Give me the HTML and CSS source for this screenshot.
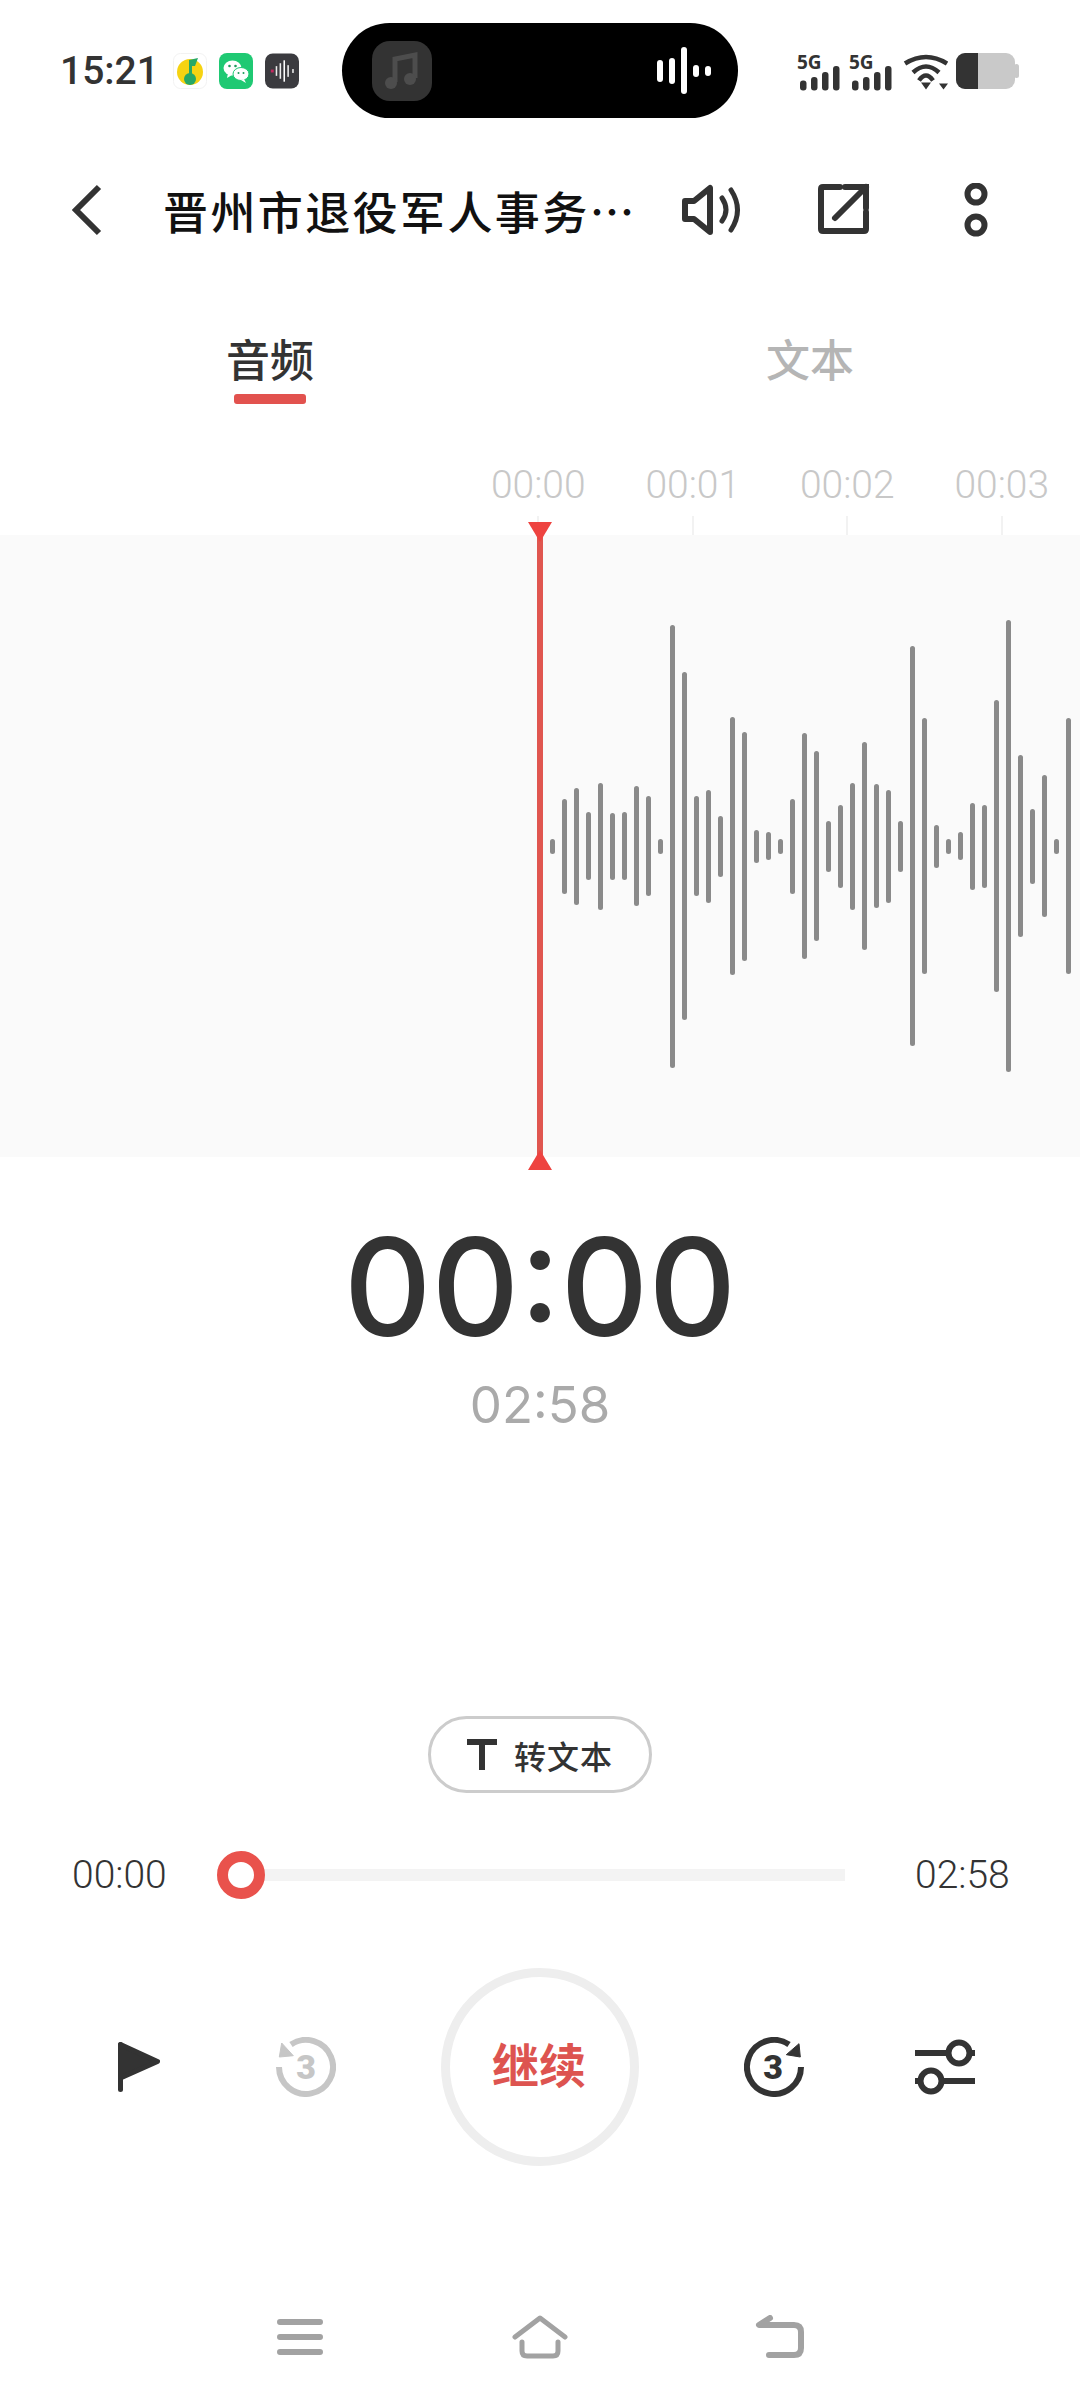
FILE: index.html
```html
<!DOCTYPE html>
<html lang="zh-CN">
  <head>
    <meta charset="UTF-8" />
    <meta name="viewport" content="width=device-width, initial-scale=1.0" />
    <title>录音播放</title>
    <link rel="stylesheet" href="styles.css">
  </head>
  <body>
<div class="page">

  <!-- status bar -->
  <div class="statusbar">
    <span class="clock">15:21</span>
    <div class="app-icons">
      <svg class="app-icon" viewBox="0 0 34 36">
        <rect x="0.5" y="0.5" width="33" height="35" rx="7" fill="#fff" stroke="#f2f2f2" />
        <circle cx="17" cy="19" r="13" fill="#f6d312" />
        <path d="M16 7 L25 5 L22 13 L19 13 L19 22 L16 22 Z" fill="#27a866" />
        <circle cx="17" cy="26" r="6" fill="#27a866" />
      </svg>
      <svg class="app-icon" viewBox="0 0 34 36">
        <rect width="34" height="36" rx="8" fill="#1fc973" />
        <ellipse cx="13.5" cy="15" rx="9" ry="7.5" fill="#fff" />
        <path d="M9 20 L8 25 L13 22 Z" fill="#fff" />
        <ellipse cx="22" cy="21" rx="8" ry="6.5" fill="#fff" stroke="#1fc973" />
        <path d="M25 26 L27 30 L22 27 Z" fill="#fff" />
        <circle cx="10.5" cy="13" r="1.3" fill="#1d9c5b" />
        <circle cx="16.5" cy="13" r="1.3" fill="#1d9c5b" />
        <circle cx="19.5" cy="20" r="1" fill="#1d9c5b" />
        <circle cx="24.5" cy="20" r="1" fill="#1d9c5b" />
      </svg>
      <svg class="app-icon" viewBox="0 0 35 36">
        <rect width="35" height="36" rx="8" fill="#3b3b3f" />
        <rect x="6" y="16.5" width="3" height="3" fill="#c2285f" />
        <rect x="11" y="13" width="1.6" height="10" fill="#eee" />
        <rect x="15" y="10" width="1.6" height="16" fill="#eee" />
        <rect x="19" y="7" width="1.6" height="22" fill="#fff" />
        <rect x="23" y="12" width="1.6" height="12" fill="#eee" />
        <rect x="28" y="16" width="1.6" height="4" fill="#eee" />
      </svg>
    </div>

    <div class="island">
      <div class="island-cover">
        <svg width="34" height="40" viewBox="0 0 34 40">
          <path d="M10 31 V8 L30 4 V27" fill="none" stroke="#4d4d4d" stroke-width="5" />
          <circle cx="6" cy="32" r="6" fill="#4d4d4d" />
          <circle cx="25" cy="28" r="6" fill="#4d4d4d" />
        </svg>
      </div>
      <div class="island-wave">
        <i class="w1"></i><i class="w2"></i><i class="w3"></i><i class="w4"></i><i class="w5"></i>
      </div>
    </div>

    <div class="status-right">
      <svg class="signal" viewBox="0 -5 44 50">
        <text x="0" y="17.5" class="signal-label">5G</text>
        <rect x="3" y="29.5" width="6.5" height="10" rx="3" />
        <rect x="14" y="26" width="6.5" height="13.5" rx="3" />
        <rect x="25" y="21" width="6.5" height="18.5" rx="3" />
        <rect x="36" y="15" width="6.5" height="24.5" rx="3" />
      </svg>
      <svg class="signal" viewBox="0 -5 44 50">
        <text x="0" y="17.5" class="signal-label">5G</text>
        <rect x="3" y="29.5" width="6.5" height="10" rx="3" />
        <rect x="14" y="26" width="6.5" height="13.5" rx="3" />
        <rect x="25" y="21" width="6.5" height="18.5" rx="3" />
        <rect x="36" y="15" width="6.5" height="24.5" rx="3" />
      </svg>
      <svg class="wifi" viewBox="0 0 47 38">
        <path d="M4 11.5 Q25 -1.5 46 11.5 M12 20.5 Q25 8.5 38 20.5 M18 28.5 Q25 18.5 32 28.5" fill="none" stroke="#333" stroke-width="4.5" />
        <path d="M20 30.5 H30 L25 37.5 Z M38 31.5 H47 L42.5 37.5 Z" fill="#333" />
      </svg>
      <svg class="battery" viewBox="0 0 63 36">
        <rect width="59" height="36" rx="9" fill="#c9c9c9" />
        <rect x="58" y="11" width="5" height="14" rx="2.5" fill="#c9c9c9" />
        <path d="M9 0 H22 V36 H9 A9 9 0 0 1 0 27 V9 A9 9 0 0 1 9 0 Z" fill="#333" />
      </svg>
    </div>
  </div>

  <!-- toolbar -->
  <div class="toolbar">
    <svg class="tool-back" width="30" height="52" viewBox="0 0 30 52">
      <path d="M27 3 L4 26 L27 49" fill="none" stroke="#333" stroke-width="6" />
    </svg>
    <div class="title">晋州市退役军人事务…</div>
    <svg class="tool-speaker" width="60" height="52" viewBox="0 0 60 52">
      <path d="M3 17 H12 L28 4 V48 L12 35 H3 Z" fill="none" stroke="#333" stroke-width="6" stroke-linejoin="round" />
      <path d="M40 14 Q48 26 40 37 M49 6 Q62 26 49 46" fill="none" stroke="#333" stroke-width="5" stroke-linecap="round" />
    </svg>
    <svg class="tool-share" width="56" height="56" viewBox="0 0 56 56">
      <path d="M24 5 H7 Q5 5 5 7 V47 Q5 49 7 49 H48 Q50 49 50 47 V30" fill="none" stroke="#333" stroke-width="6" stroke-linecap="round" />
      <path d="M29 5 H50 V26 M50 5 L19 36" fill="none" stroke="#333" stroke-width="6" stroke-linecap="round" />
    </svg>
    <svg class="tool-more" width="24" height="54" viewBox="0 0 24 54">
      <circle cx="12" cy="11" r="8.5" fill="none" stroke="#333" stroke-width="6" />
      <circle cx="12" cy="42" r="8.5" fill="none" stroke="#333" stroke-width="6" />
    </svg>
  </div>

  <!-- tabs -->
  <div class="tabs">
    <div class="tab active">音频</div>
    <div class="tab">文本</div>
  </div>

  <!-- time ruler -->
  <div class="ruler">
    <div class="ruler-mark"><span>00:00</span><i></i></div>
    <div class="ruler-mark"><span>00:01</span><i></i></div>
    <div class="ruler-mark"><span>00:02</span><i></i></div>
    <div class="ruler-mark"><span>00:03</span><i></i></div>
  </div>

  <!-- waveform -->
  <div class="wave-panel">
    <div class="bars">
      <div class="bar" style="height:15px"></div>
      <div class="bar" style="height:95px"></div>
      <div class="bar" style="height:117px"></div>
      <div class="bar" style="height:68px"></div>
      <div class="bar" style="height:127px"></div>
      <div class="bar" style="height:67px"></div>
      <div class="bar" style="height:68px"></div>
      <div class="bar" style="height:120px"></div>
      <div class="bar" style="height:100px"></div>
      <div class="bar" style="height:15px"></div>
      <div class="bar" style="height:443px"></div>
      <div class="bar" style="height:348px"></div>
      <div class="bar" style="height:100px"></div>
      <div class="bar" style="height:113px"></div>
      <div class="bar" style="height:61px"></div>
      <div class="bar" style="height:258px"></div>
      <div class="bar" style="height:229px"></div>
      <div class="bar" style="height:33px"></div>
      <div class="bar" style="height:28px"></div>
      <div class="bar" style="height:15px"></div>
      <div class="bar" style="height:95px"></div>
      <div class="bar" style="height:226px"></div>
      <div class="bar" style="height:190px"></div>
      <div class="bar" style="height:51px"></div>
      <div class="bar" style="height:83px"></div>
      <div class="bar" style="height:127px"></div>
      <div class="bar" style="height:208px"></div>
      <div class="bar" style="height:124px"></div>
      <div class="bar" style="height:113px"></div>
      <div class="bar" style="height:51px"></div>
      <div class="bar" style="height:400px"></div>
      <div class="bar" style="height:256px"></div>
      <div class="bar" style="height:43px"></div>
      <div class="bar" style="height:15px"></div>
      <div class="bar" style="height:28px"></div>
      <div class="bar" style="height:87px"></div>
      <div class="bar" style="height:83px"></div>
      <div class="bar" style="height:292px"></div>
      <div class="bar" style="height:452px"></div>
      <div class="bar" style="height:182px"></div>
      <div class="bar" style="height:75px"></div>
      <div class="bar" style="height:142px"></div>
      <div class="bar" style="height:15px"></div>
      <div class="bar" style="height:256px"></div>
    </div>
    <div class="playhead"></div>
  </div>

  <!-- current time -->
  <div class="time-big">00:00</div>
  <div class="time-total">02:58</div>

  <div class="transcribe-row">
    <button type="button" class="transcribe">
      <svg width="30" height="31" viewBox="0 0 30 31">
        <path d="M0 0 H30 V6 H18 V31 H12 V6 H0 Z" fill="#333" />
      </svg>
      <span>转文本</span>
    </button>
  </div>

  <!-- progress -->
  <div class="progress">
    <span class="progress-time">00:00</span>
    <div class="track"><div class="thumb"></div></div>
    <span class="progress-time end">02:58</span>
  </div>

  <!-- playback controls -->
  <div class="controls">
    <svg class="ctl-flag" width="42" height="50" viewBox="0 0 42 50">
      <path d="M2.5 2.5 L39.5 19.5 L2.5 36 Z" fill="#333" stroke="#333" stroke-width="5" stroke-linejoin="round" />
      <path d="M2.5 2.5 V47.5" stroke="#333" stroke-width="5" stroke-linecap="round" />
    </svg>
    <svg class="ctl-back" width="60" height="60" viewBox="0 0 60 60">
      <path d="M3 30 A27 27 0 1 0 15 7.5" fill="none" stroke="#c6c6c6" stroke-width="6" />
      <path d="M5.7 6 L3.3 20 L17.3 18.7 Z" fill="#c6c6c6" stroke="#c6c6c6" stroke-linejoin="round" />
      <text x="30" y="42" class="skip-num dim">3</text>
    </svg>
    <button type="button" class="play">继续</button>
    <svg class="ctl-forward" width="60" height="60" viewBox="0 0 60 60">
      <path d="M57 30 A27 27 0 1 1 45 7.5" fill="none" stroke="#333" stroke-width="6" />
      <path d="M55 6.7 L56.3 20 L42.3 17.7 Z" fill="#333" stroke="#333" stroke-linejoin="round" />
      <text x="29" y="42" class="skip-num">3</text>
    </svg>
    <svg class="ctl-settings" width="60" height="56" viewBox="0 0 60 56">
      <path d="M0 14 H60 M0 42 H60" stroke="#333" stroke-width="6" />
      <circle cx="44" cy="14" r="10.5" fill="#fff" stroke="#333" stroke-width="6" />
      <circle cx="16" cy="42" r="10.5" fill="#fff" stroke="#333" stroke-width="6" />
    </svg>
  </div>

  <!-- navigation bar -->
  <div class="navbar">
    <svg width="46" height="36" viewBox="0 0 46 36">
      <path d="M3 3 H43 M3 18 H43 M3 33 H43" stroke="#a2a2a2" stroke-width="6" stroke-linecap="round" />
    </svg>
    <svg width="56" height="44" viewBox="0 0 56 44">
      <path d="M3 22 L28 3 L53 22" fill="none" stroke="#a2a2a2" stroke-width="5" stroke-linecap="round" stroke-linejoin="round" />
      <path d="M10 27 V36 Q10 41 15 41 H41 Q46 41 46 36 V27" fill="none" stroke="#a2a2a2" stroke-width="5" stroke-linecap="round" />
    </svg>
    <svg width="50" height="44" viewBox="0 0 50 44">
      <path d="M15 3 L4 10 H39 Q46 10 46 17 V33 Q46 40 39 40 H14" fill="none" stroke="#a2a2a2" stroke-width="6" stroke-linecap="round" stroke-linejoin="round" />
    </svg>
  </div>

</div>
  </body>
</html>
```

FILE: styles.css
```css
* {
  margin: 0;
  padding: 0;
  box-sizing: border-box;
}

body {
  background-color: #fff;
  font-family: Roboto, "Noto Sans CJK SC", sans-serif;
  color: #333;
}

.page {
  width: 1080px;
  height: 2400px;
  overflow: hidden;
}

/* status bar */
.statusbar {
  display: flex;
  align-items: center;
  height: 95px;
  margin-top: 23px;
  padding-left: 60px;
}

.clock {
  width: 113px;
  font-size: 39px;
  font-weight: 500;
}

.app-icons {
  display: flex;
  align-items: center;
  gap: 12px;
}

.app-icon {
  width: 34px;
  height: 36px;
}

.island {
  display: flex;
  align-items: center;
  justify-content: space-between;
  width: 396px;
  height: 95px;
  margin-left: 43px;
  padding: 0 27px 0 30px;
  background-color: #000;
  border-radius: 48px;
}

.island-cover {
  display: flex;
  align-items: center;
  justify-content: center;
  width: 60px;
  height: 60px;
  background-color: #333;
  border-radius: 18px;
}

.island-wave {
  display: flex;
  align-items: center;
  gap: 6px;
}

.island-wave i {
  display: block;
  width: 6px;
  background-color: #fff;
  border-radius: 3px;
}

.island-wave .w1 { height: 22px; }
.island-wave .w2 { height: 26px; }
.island-wave .w3 { height: 47px; }
.island-wave .w4 { height: 12px; }
.island-wave .w5 { height: 10px; }

.status-right {
  display: flex;
  align-items: center;
  gap: 8px;
  margin-left: 59px;
}

.signal {
  width: 44px;
  height: 50px;
  fill: #333;
}

.signal-label {
  font-family: "Open Sans", sans-serif;
  font-size: 19px;
  font-weight: 700;
}

.wifi {
  width: 47px;
  height: 38px;
}

.battery {
  width: 63px;
  height: 36px;
}

/* toolbar */
.toolbar {
  display: flex;
  align-items: center;
  height: 184px;
  padding-left: 72px;
}

.title {
  width: 520px;
  margin-left: 61px;
  font-family: "Noto Sans CJK SC", sans-serif;
  font-size: 45px;
  font-weight: 500;
  letter-spacing: 2.4px;
  white-space: nowrap;
  color: #111;
}

.tool-speaker {
  margin-left: -1px;
}

.tool-share {
  margin-left: 74px;
}

.tool-more {
  margin-left: 92px;
}

/* tabs */
.tabs {
  display: grid;
  grid-template-columns: 1fr 1fr;
  padding-top: 30px;
}

.tab {
  position: relative;
  height: 72px;
  font-family: "Noto Sans CJK SC", sans-serif;
  font-size: 44px;
  font-weight: 500;
  line-height: 52px;
  text-align: center;
  color: #b5b5b5;
}

.tab.active {
  color: #333;
}

.tab.active::after {
  content: "";
  position: absolute;
  left: 234px;
  bottom: 0;
  width: 72px;
  height: 10px;
  background-color: #e2524e;
  border-radius: 3px;
}

/* time ruler */
.ruler {
  display: flex;
  height: 131px;
  padding-top: 61px;
  padding-left: 461px;
}

.ruler-mark {
  display: flex;
  flex-direction: column;
  align-items: center;
  width: 154.5px;
  font-size: 39px;
  font-weight: 300;
  line-height: 40px;
  color: #c8c8c8;
}

.ruler-mark i {
  display: block;
  width: 2px;
  height: 19px;
  margin-top: 11px;
  background-color: #f2f2f2;
}

/* waveform */
.wave-panel {
  position: relative;
  height: 622px;
  background-color: #fafafa;
}

.bars {
  display: flex;
  align-items: center;
  gap: 7px;
  height: 100%;
  padding-left: 550px;
  overflow: hidden;
}

.bar {
  flex: none;
  width: 5px;
  background-color: #8a8a8a;
  border-radius: 3px;
}

.playhead {
  position: absolute;
  top: -13px;
  bottom: -13px;
  left: 537px;
  width: 6px;
  background-color: #e0564f;
}

.playhead::before,
.playhead::after {
  content: "";
  position: absolute;
  left: -9px;
  border-left: 12px solid transparent;
  border-right: 12px solid transparent;
}

.playhead::before {
  top: 0;
  border-top: 20px solid #ee4340;
}

.playhead::after {
  bottom: 0;
  border-bottom: 20px solid #ee4340;
}

/* current time */
.time-big {
  margin-top: 55px;
  font-family: Inter, Roboto, sans-serif;
  font-size: 136px;
  font-weight: 500;
  line-height: 150px;
  text-align: center;
}

.time-total {
  margin-top: 13px;
  font-family: Inter, Roboto, sans-serif;
  font-size: 51px;
  line-height: 60px;
  text-align: center;
  color: #aaa;
}

.transcribe-row {
  display: flex;
  justify-content: center;
  margin-top: 281px;
}

.transcribe {
  display: flex;
  align-items: center;
  gap: 17px;
  width: 224px;
  height: 77px;
  padding-left: 36px;
  background: none;
  border: 3px solid #ccc;
  border-radius: 39px;
  color: #333;
  font-family: "Noto Sans CJK SC", sans-serif;
  font-size: 32px;
  font-weight: 500;
  letter-spacing: 1px;
}

/* progress */
.progress {
  display: flex;
  align-items: center;
  height: 60px;
  margin-top: 52px;
  padding-left: 72px;
}

.progress-time {
  width: 95px;
  font-size: 39px;
  font-weight: 300;
}

.progress-time.end {
  margin-left: 70px;
}

.track {
  position: relative;
  width: 628px;
  height: 12px;
  margin-left: 50px;
  background-color: #f3f3f3;
}

.thumb {
  position: absolute;
  top: -18px;
  left: 0;
  width: 48px;
  height: 48px;
  background-color: #fff;
  border: 11px solid #e9524c;
  border-radius: 50%;
}

/* playback controls */
.controls {
  display: flex;
  align-items: center;
  height: 198px;
  margin-top: 63px;
  padding-left: 118px;
}

.ctl-back {
  margin-left: 116px;
}

.play {
  width: 198px;
  height: 198px;
  margin-left: 105px;
  padding: 0 2px 10px 0;
  background: none;
  border: 9px solid #eee;
  border-radius: 50%;
  color: #dd5450;
  font-family: "Noto Sans CJK SC", sans-serif;
  font-size: 47px;
  font-weight: 700;
}

.ctl-forward {
  margin-left: 105px;
}

.ctl-settings {
  margin-left: 111px;
}

.skip-num {
  font-family: Roboto, sans-serif;
  font-size: 34px;
  font-weight: 900;
  text-anchor: middle;
  fill: #333;
}

.skip-num.dim {
  fill: #c6c6c6;
}

/* navigation bar */
.navbar {
  display: grid;
  grid-template-columns: repeat(3, 240px);
  justify-content: center;
  justify-items: center;
  align-items: center;
  height: 60px;
  margin-top: 141px;
}
```
